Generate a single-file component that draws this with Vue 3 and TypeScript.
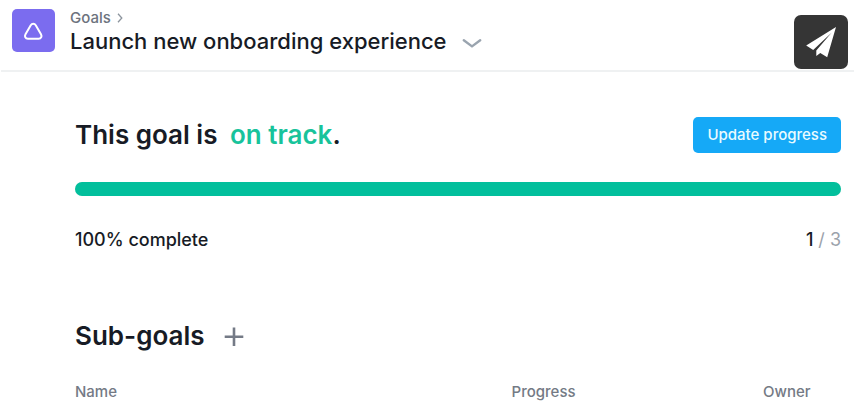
<script setup lang="ts">
import { computed, ref } from 'vue'

const goalTitle = 'Launch new onboarding experience'
const status = 'on track'
const percent = ref<number>(100)
const done = 1
const total = 3
const columns: string[] = ['Name', 'Progress', 'Owner']

const barStyle = computed(() => ({ width: `${percent.value}%` }))
</script>

<template>
  <div class="page">
    <header class="topbar">
      <div class="goal-icon">
        <svg width="21" height="20" viewBox="0 0 21 20" fill="none" aria-hidden="true">
          <path
            d="M7.9 4.1 C8.9 2.3 11.6 2.3 12.6 4.1 L18 13.2 C19.2 15.5 18.1 17.7 15.6 17.7 H4.9 C2.4 17.7 1.3 15.5 2.5 13.2 Z"
            stroke="#fff"
            stroke-width="2"
            stroke-linejoin="round"
          />
        </svg>
      </div>
      <div class="heading">
        <nav class="crumbs" aria-label="Breadcrumb">
          <a href="#" class="crumb">Goals</a>
          <svg width="6" height="10" viewBox="0 0 6 10" fill="none" aria-hidden="true">
            <path d="M1 0.8 L4.8 5 L1 9.2" stroke="#8d959e" stroke-width="1.3" />
          </svg>
        </nav>
        <div class="title-row">
          <h1 class="title">{{ goalTitle }}</h1>
          <button class="icon-button" type="button" aria-label="Goal menu">
            <svg width="20" height="16" viewBox="0 0 20 16" fill="none">
              <path
                d="M1.8 7.3 L10 13.4 L18.2 7.3"
                stroke="#9aa4af"
                stroke-width="2.4"
                stroke-linecap="round"
                stroke-linejoin="round"
              />
            </svg>
          </button>
        </div>
      </div>
      <button class="send" type="button" aria-label="Send">
        <svg width="54" height="54" viewBox="0 0 54 54" aria-hidden="true">
          <path
            fill="#fff"
            d="M42 12 L12.2 30.4 L19.2 35 L37.5 17.8 L22.3 35.6 L22.3 41 L26.3 38.1 L33.2 42.2 Z"
          />
        </svg>
      </button>
    </header>

    <main class="content">
      <section class="status">
        <h2 class="section-title">
          This goal is <span class="state">{{ status }}</span>.
        </h2>
        <button class="primary" type="button">Update progress</button>
      </section>

      <div
        class="track"
        role="progressbar"
        aria-label="Goal progress"
        :aria-valuenow="percent"
        aria-valuemin="0"
        aria-valuemax="100"
      >
        <div class="fill" :style="barStyle"></div>
      </div>

      <div class="summary">
        <span>{{ percent }}% complete</span>
        <span>{{ done }} <span class="muted">/ {{ total }}</span></span>
      </div>

      <section class="subgoals">
        <div class="sub-head">
          <h2 class="section-title">Sub-goals</h2>
          <button class="icon-button" type="button" aria-label="Add sub-goal">
            <svg width="20" height="20" viewBox="0 0 20 20" fill="none">
              <path d="M10 1.5 V20 M0.7 10.8 H19.3" stroke="#747a86" stroke-width="2.6" />
            </svg>
          </button>
        </div>
        <table class="table">
          <thead>
            <tr>
              <th v-for="column in columns" :key="column" scope="col">{{ column }}</th>
            </tr>
          </thead>
        </table>
      </section>
    </main>
  </div>
</template>

<style>
body {
  margin: 0;
  background: #fff;
}
</style>

<style scoped>
.page {
  font-family: Inter, "Liberation Sans", sans-serif;
  color: #171b25;
  background: #fff;
}

h1,
h2 {
  margin: 0;
}

button {
  padding: 0;
  border: 0;
  font-family: inherit;
  cursor: pointer;
}

.topbar {
  display: flex;
  align-items: flex-start;
  margin: 0 1px;
  padding: 9px 6px 1px 11px;
  border-bottom: 2px solid #eff1f2;
}

.goal-icon {
  display: flex;
  align-items: center;
  justify-content: center;
  width: 43px;
  height: 43px;
  border-radius: 5px;
  background: #7b6cef;
}

.heading {
  flex: 1;
  padding-left: 15px;
}

.crumbs {
  display: flex;
  align-items: center;
  gap: 6px;
  height: 18px;
}

.crumb {
  color: #6d737e;
  font-size: 15px;
  font-weight: 500;
  line-height: 18px;
  text-decoration: none;
}

.title-row {
  display: flex;
  align-items: center;
  gap: 15px;
}

.title {
  font-size: 22px;
  font-weight: 500;
  line-height: 28px;
}

.icon-button {
  display: flex;
  background: none;
}

.send {
  display: flex;
  margin-top: 6px;
  border-radius: 7px;
  background: #353535;
}

.content {
  padding: 45px 14px 0 75px;
}

.status,
.summary {
  display: flex;
  align-items: center;
  justify-content: space-between;
}

.section-title {
  font-size: 26px;
  font-weight: 600;
  line-height: 36px;
}

.state {
  margin-left: 6px;
  color: #18c39b;
}

.primary {
  padding: 0 14px;
  border-radius: 5px;
  background: #15a9f7;
  color: #e9fbff;
  font-size: 15px;
  font-weight: 500;
  line-height: 36px;
}

.track {
  height: 14px;
  margin-top: 29px;
  border-radius: 7px;
  background: #e6e9ec;
}

.fill {
  height: 100%;
  border-radius: 7px;
  background: #02bf9c;
}

.summary {
  margin-top: 32px;
  font-size: 18px;
  font-weight: 500;
  line-height: 24px;
}

.muted {
  color: #9ba2ab;
  font-weight: 400;
}

.subgoals {
  margin-top: 66px;
}

.sub-head {
  display: flex;
  align-items: center;
  gap: 19px;
}

.table {
  width: 100%;
  margin-top: 28px;
  border-collapse: collapse;
  table-layout: fixed;
}

th {
  padding: 0;
  color: #747a85;
  font-size: 15px;
  font-weight: 500;
  line-height: 20px;
  text-align: left;
}

th:first-child {
  width: 57%;
}

th:last-child {
  width: 78px;
}
</style>
